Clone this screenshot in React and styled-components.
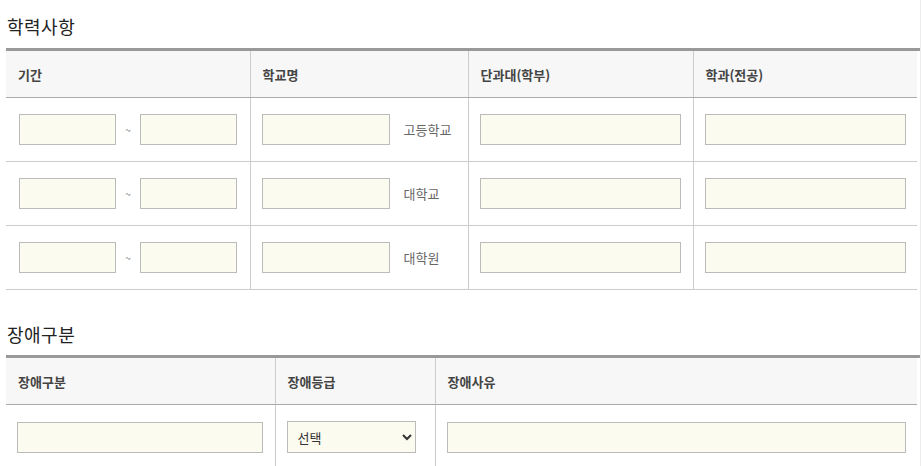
import React from 'react';
import styled, { createGlobalStyle } from 'styled-components';

const GlobalStyle = createGlobalStyle`
  html, body {
    margin: 0;
    padding: 0;
    background: #fff;
  }
  body {
    font-family: "Noto Sans CJK KR", "Noto Sans", sans-serif;
    color: #333;
  }
`;

const Page = styled.div`
  width: 921px;
  height: 466px;
  overflow: hidden;
  padding-left: 6px;
  box-sizing: border-box;
  border-right: 1px solid #ececec;
`;

const Section = styled.section`
  margin-top: ${(p) => p.$top}px;
`;

const Title = styled.h3`
  margin: 0 0 ${(p) => p.$gap}px 1px;
  font-size: 18px;
  line-height: 24px;
  font-weight: 400;
  color: #222;
  letter-spacing: 0.5px;
`;

const TableWrap = styled.div`
  border-top: 3px solid #999;
  width: 914px;
`;

const Table = styled.table`
  width: 911px;
  border-collapse: collapse;
  table-layout: fixed;
`;

const Th = styled.th`
  height: 46px;
  padding: 0 0 0 12px;
  background: #f7f7f7;
  border-bottom: 1px solid #aaa;
  border-left: 1px solid #ccc;
  text-align: left;
  font-size: 13px;
  font-weight: 700;
  color: #444;
  &:first-child {
    border-left: none;
  }
`;

const Td = styled.td`
  height: ${(p) => p.$h || 63}px;
  padding: 0 0 0 ${(p) => p.$pl || 11}px;
  border-bottom: 1px solid #ccc;
  border-left: 1px solid #ccc;
  vertical-align: middle;
  &:first-child {
    border-left: none;
  }
`;

const Inline = styled.div`
  display: flex;
  align-items: center;
`;

const Field = styled.input`
  box-sizing: border-box;
  width: ${(p) => p.$w}px;
  height: 31px;
  margin: 0;
  padding: 0 8px;
  border: 1px solid #bbb;
  background: #fbfbef;
  border-radius: 0;
  outline: none;
  font-family: inherit;
  font-size: 13px;
`;

const Tilde = styled.span`
  width: 24px;
  text-align: center;
  font-size: 10px;
  color: #888;
`;

const SchoolType = styled.span`
  margin-left: 14px;
  font-size: 13px;
  color: #666;
  white-space: nowrap;
`;

const Select = styled.select`
  box-sizing: border-box;
  width: 129px;
  height: 32px;
  margin: 0;
  padding: 0 6px;
  border: 1px solid #bbb;
  background: #fbfbef;
  border-radius: 0;
  font-family: inherit;
  font-size: 13px;
  color: #333;
  outline: none;
`;

const schools = ['고등학교', '대학교', '대학원'];

const App = () => {
  return (
    <Page>
      <GlobalStyle />
      <Section $top={14}>
        <Title $gap={10}>학력사항</Title>
        <TableWrap>
          <Table>
            <colgroup>
              <col style={{ width: 244 }} />
              <col style={{ width: 218 }} />
              <col style={{ width: 225 }} />
              <col style={{ width: 224 }} />
            </colgroup>
            <thead>
              <tr>
                <Th>기간</Th>
                <Th>학교명</Th>
                <Th>단과대(학부)</Th>
                <Th>학과(전공)</Th>
              </tr>
            </thead>
            <tbody>
              {schools.map((name, i) => (
                <tr key={name}>
                  <Td $pl={13} $h={i === 1 ? 62 : 63}>
                    <Inline>
                      <Field $w={97} />
                      <Tilde>~</Tilde>
                      <Field $w={97} />
                    </Inline>
                  </Td>
                  <Td>
                    <Inline>
                      <Field $w={128} />
                      <SchoolType>{name}</SchoolType>
                    </Inline>
                  </Td>
                  <Td>
                    <Field $w={201} />
                  </Td>
                  <Td>
                    <Field $w={201} />
                  </Td>
                </tr>
              ))}
            </tbody>
          </Table>
        </TableWrap>
      </Section>
      <Section $top={32}>
        <Title $gap={9}>장애구분</Title>
        <TableWrap>
          <Table>
            <colgroup>
              <col style={{ width: 269 }} />
              <col style={{ width: 160 }} />
              <col style={{ width: 482 }} />
            </colgroup>
            <thead>
              <tr>
                <Th>장애구분</Th>
                <Th>장애등급</Th>
                <Th>장애사유</Th>
              </tr>
            </thead>
            <tbody>
              <tr>
                <Td $pl={11} $h={64}>
                  <Field $w={246} />
                </Td>
                <Td>
                  <Select defaultValue="">
                    <option value="">선택</option>
                    <option value="1">1급</option>
                    <option value="2">2급</option>
                    <option value="3">3급</option>
                  </Select>
                </Td>
                <Td>
                  <Field $w={459} />
                </Td>
              </tr>
            </tbody>
          </Table>
        </TableWrap>
      </Section>
    </Page>
  );
};

export default App;
